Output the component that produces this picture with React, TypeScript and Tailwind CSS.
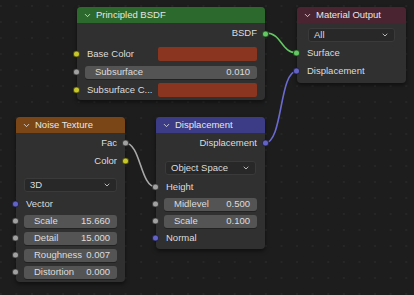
import React from 'react';
import { ChevronDown } from 'lucide-react';

type SocketColor = 'yellow' | 'gray' | 'purple' | 'green';

const SOCKET_BG: Record<SocketColor, string> = {
  yellow: 'bg-[#c7c729]',
  gray: 'bg-[#a1a1a1]',
  purple: 'bg-[#6363c7]',
  green: 'bg-[#63c763]',
};

const Socket = ({ color, side }: { color: SocketColor; side: 'left' | 'right' }) => (
  <span
    className={`absolute top-1/2 h-[7px] w-[7px] -translate-y-1/2 rounded-full border border-black/60 ${SOCKET_BG[color]} ${
      side === 'left' ? 'left-[-4px]' : 'right-[-4px]'
    }`}
  />
);

const Header = ({ title, bg }: { title: string; bg: string }) => (
  <div className={`flex h-[16px] items-center gap-[4px] rounded-t-[4px] pl-[6px] text-[9.5px] text-[#e6e6e6] ${bg}`}>
    <ChevronDown className="h-[9px] w-[9px]" strokeWidth={2.2} />
    <span>{title}</span>
  </div>
);

const OutputRow = ({ label, color, h = 'h-[18px]' }: { label: string; color: SocketColor; h?: string }) => (
  <div className={`relative flex ${h} items-center justify-end pr-[8px]`}>
    <span>{label}</span>
    <Socket color={color} side="right" />
  </div>
);

const InputRow = ({ label, color, h = 'h-[18px]' }: { label: string; color: SocketColor; h?: string }) => (
  <div className={`relative flex ${h} items-center pl-[10px]`}>
    <span>{label}</span>
    <Socket color={color} side="left" />
  </div>
);

const NumberRow = ({ label, value }: { label: string; value: string }) => (
  <div className="relative flex h-[14px] items-center px-[8px]">
    <Socket color="gray" side="left" />
    <div className="flex h-[13px] flex-1 items-center justify-between rounded-[3px] bg-[#545454] pl-[10px] pr-[7px] shadow-[0_1px_0_#222]">
      <span>{label}</span>
      <span>{value}</span>
    </div>
  </div>
);

const Dropdown = ({ label }: { label: string }) => (
  <div className="flex h-[14px] items-center justify-between rounded-[3px] border border-[#3a3a3a] bg-[#282828] pl-[5px] pr-[5px]">
    <span>{label}</span>
    <ChevronDown className="h-[8px] w-[8px]" strokeWidth={2.4} />
  </div>
);

export default function App() {
  return (
    <div
      className="relative h-[295px] w-[414px] overflow-hidden bg-[#1d1d1d] bg-[radial-gradient(circle,#262626_0.7px,transparent_1.1px)] bg-[size:15.6px_16px] bg-[position:-7px_-2px] text-[9.5px] text-[#dcdcdc]"
      style={{ fontFamily: '"Liberation Sans", Arial, sans-serif' }}
    >
      <svg className="absolute inset-0" width="414" height="295" fill="none">
        <path d="M266 33 C282 33 281 53 297 53" stroke="#63c763" strokeWidth="1.6" />
        <path d="M125 143 C141 143 140 187 156 187" stroke="#a8a8a8" strokeWidth="1.6" />
        <path d="M265 143 C283 143 279 71 297 71" stroke="#6a6ad0" strokeWidth="1.6" />
      </svg>

      {/* Principled BSDF */}
      <div className="absolute left-[77px] top-[7px] w-[188px] rounded-[4px] bg-[#303030] pb-[3px] shadow-[0_2px_4px_rgba(0,0,0,0.5)]">
        <Header title="Principled BSDF" bg="bg-[#2c692c]" />
        <div className="flex flex-col gap-[4px] pt-[1px]">
          <OutputRow label="BSDF" color="green" h="h-[19px]" />
          <div className="relative flex h-[14px] items-center pl-[10px] pr-[8px]">
            <Socket color="yellow" side="left" />
            <span className="w-[71px]">Base Color</span>
            <div className="h-[14px] flex-1 rounded-[2px] bg-[#8a3520]" />
          </div>
          <NumberRow label="Subsurface" value="0.010" />
          <div className="relative flex h-[14px] items-center pl-[10px] pr-[8px]">
            <Socket color="yellow" side="left" />
            <span className="w-[71px]">Subsurface C...</span>
            <div className="h-[14px] flex-1 rounded-[2px] bg-[#8a3520]" />
          </div>
        </div>
      </div>

      {/* Material Output */}
      <div className="absolute left-[297px] top-[7px] w-[109px] rounded-[4px] bg-[#303030] pb-[3px] shadow-[0_2px_4px_rgba(0,0,0,0.5)]">
        <Header title="Material Output" bg="bg-[#4a2430]" />
        <div className="px-[11px] pt-[5px]">
          <Dropdown label="All" />
        </div>
        <div className="flex flex-col pt-[2px]">
          <InputRow label="Surface" color="green" />
          <InputRow label="Displacement" color="purple" />
        </div>
      </div>

      {/* Noise Texture */}
      <div className="absolute left-[16px] top-[117px] w-[109px] rounded-[4px] bg-[#303030] pb-[3px] shadow-[0_2px_4px_rgba(0,0,0,0.5)]">
        <Header title="Noise Texture" bg="bg-[#7a4618]" />
        <div className="flex flex-col pt-[1px]">
          <OutputRow label="Fac" color="gray" />
          <OutputRow label="Color" color="yellow" />
        </div>
        <div className="px-[8px] pt-[8px]">
          <Dropdown label="3D" />
        </div>
        <div className="flex flex-col gap-[3px] pt-[5px]">
          <InputRow label="Vector" color="purple" h="h-[14px]" />
          <NumberRow label="Scale" value="15.660" />
          <NumberRow label="Detail" value="15.000" />
          <NumberRow label="Roughness" value="0.007" />
          <NumberRow label="Distortion" value="0.000" />
        </div>
      </div>

      {/* Displacement */}
      <div className="absolute left-[156px] top-[117px] w-[109px] rounded-[4px] bg-[#303030] pb-[4px] shadow-[0_2px_4px_rgba(0,0,0,0.5)]">
        <Header title="Displacement" bg="bg-[#3c3c86]" />
        <div className="flex flex-col pt-[1px]">
          <OutputRow label="Displacement" color="purple" />
        </div>
        <div className="px-[9px] pt-[9px]">
          <Dropdown label="Object Space" />
        </div>
        <div className="flex flex-col gap-[3px] pt-[5px]">
          <InputRow label="Height" color="gray" h="h-[14px]" />
          <NumberRow label="Midlevel" value="0.500" />
          <NumberRow label="Scale" value="0.100" />
          <InputRow label="Normal" color="purple" h="h-[14px]" />
        </div>
      </div>
    </div>
  );
}
